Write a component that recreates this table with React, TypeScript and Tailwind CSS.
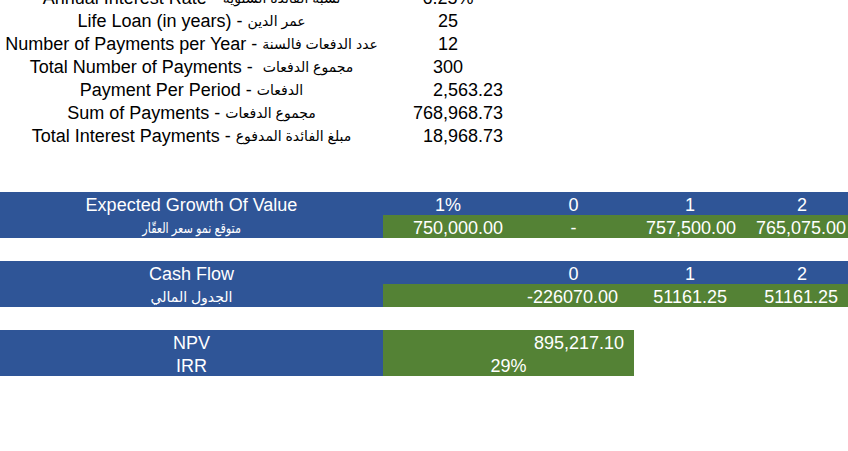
import React from 'react';

// Column widths of the sheet: A (labels), B, C, D, E
const grid = 'grid grid-cols-[383px_130px_121px_112px_112px] w-[858px]';
const cell = 'h-[23px] flex items-end leading-[20px] whitespace-pre';
const blue = 'bg-[#2f5597] text-white';
const green = 'bg-[#548235] text-white';

type Summary = { en: string; ar: string; value: string; align: 'center' | 'right' };

const summary: Summary[] = [
  { en: 'Annual Interest Rate - ', ar: 'نسبة الفائدة السنوية', value: '6.25%', align: 'center' },
  { en: 'Life Loan (in years) - ', ar: 'عمر الدين', value: '25', align: 'center' },
  { en: 'Number of Payments per Year - ', ar: 'عدد الدفعات فالسنة', value: '12', align: 'center' },
  { en: 'Total Number of Payments -  ', ar: 'مجموع الدفعات', value: '300', align: 'center' },
  { en: 'Payment Per Period - ', ar: 'الدفعات', value: '2,563.23', align: 'right' },
  { en: 'Sum of Payments - ', ar: 'مجموع الدفعات', value: '768,968.73', align: 'right' },
  { en: 'Total Interest Payments - ', ar: 'مبلغ الفائدة المدفوع', value: '18,968.73', align: 'right' },
];

// Arabic falls back to DejaVu, which runs wide, so it gets a smaller size
const Ar = ({ children }: { children: React.ReactNode }) => (
  <span className="text-[14px]">{children}</span>
);

const Spacer = () => <div className="h-[23px]" />;

export default function App() {
  return (
    <div className="w-[848px] h-[451px] overflow-hidden bg-white text-black text-[18px] font-['Liberation_Sans','DejaVu_Sans',sans-serif]">
      <div className="-mt-[15px]">
        {summary.map((row) => (
          <div key={row.en} className={grid}>
            <div className={`${cell} justify-center`}>
              <span>{row.en}</span>
              <Ar>{row.ar}</Ar>
            </div>
            <div className={`${cell} ${row.align === 'center' ? 'justify-center' : 'justify-end pr-[10px]'}`}>
              {row.value}
            </div>
          </div>
        ))}

        <Spacer />
        <Spacer />

        {/* Expected growth of property value */}
        <div className={`${grid} ${blue}`}>
          <div className={`${cell} justify-center`}>Expected Growth Of Value</div>
          <div className={`${cell} justify-center`}>1%</div>
          <div className={`${cell} justify-center`}>0</div>
          <div className={`${cell} justify-center`}>1</div>
          <div className={`${cell} justify-center`}>2</div>
        </div>
        <div className={`${grid} text-white`}>
          <div className={`${cell} ${blue} justify-center`}>
            <span className="inline-block text-[14px] scale-x-[0.8]">متوقع نمو سعر العقّار</span>
          </div>
          <div className={`${cell} ${green} justify-end pr-[10px]`}>750,000.00</div>
          <div className={`${cell} ${green} justify-center`}>-</div>
          <div className={`${cell} ${green} justify-end pr-[10px]`}>757,500.00</div>
          <div className={`${cell} ${green} justify-end pr-[12px]`}>765,075.00</div>
        </div>

        <Spacer />

        {/* Cash flow */}
        <div className={`${grid} ${blue}`}>
          <div className={`${cell} justify-center`}>Cash Flow</div>
          <div className={cell} />
          <div className={`${cell} justify-center`}>0</div>
          <div className={`${cell} justify-center`}>1</div>
          <div className={`${cell} justify-center`}>2</div>
        </div>
        <div className={`${grid} text-white`}>
          <div className={`${cell} ${blue} justify-center`}>
            <Ar>الجدول المالي</Ar>
          </div>
          <div className={`${cell} ${green}`} />
          <div className={`${cell} ${green} justify-end pr-[16px]`}>-226070.00</div>
          <div className={`${cell} ${green} justify-end pr-[19px]`}>51161.25</div>
          <div className={`${cell} ${green} justify-end pr-[20px]`}>51161.25</div>
        </div>

        <Spacer />

        {/* NPV / IRR */}
        <div className={grid}>
          <div className={`${cell} ${blue} justify-center`}>NPV</div>
          <div className={`${cell} ${green} col-span-2 justify-end pr-[10px]`}>895,217.10</div>
        </div>
        <div className={grid}>
          <div className={`${cell} ${blue} justify-center`}>IRR</div>
          <div className={`${cell} ${green} col-span-2 justify-center`}>29%</div>
        </div>
      </div>
    </div>
  );
}
